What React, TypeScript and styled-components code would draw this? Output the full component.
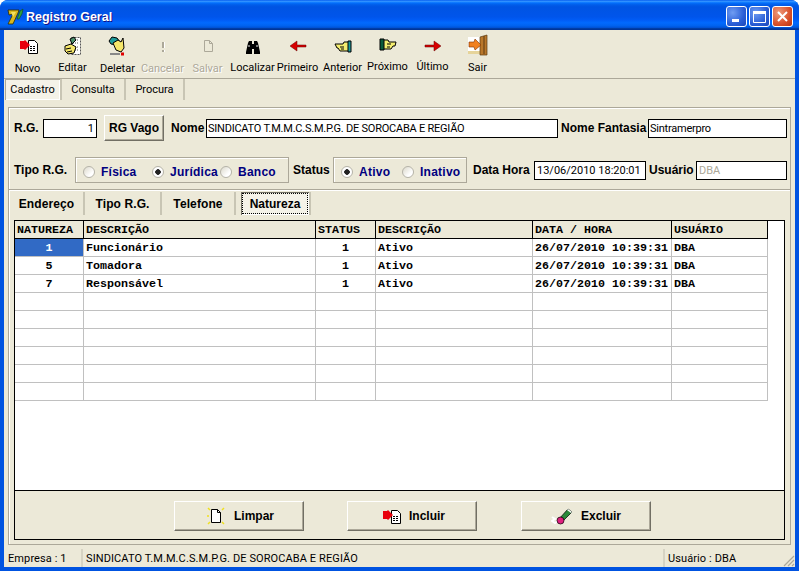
import React from 'react';
import styled, { createGlobalStyle } from 'styled-components';

const GlobalStyle = createGlobalStyle`
  html, body { margin: 0; padding: 0; background: #fff; }
  * { box-sizing: border-box; }
`;

const Window = styled.div`
  width: 799px;
  height: 571px;
  display: flex;
  flex-direction: column;
  border-radius: 8px 8px 0 0;
  overflow: hidden;
  background: #0053e1;
  font-family: "Liberation Sans", Arial, sans-serif;
  font-size: 12px;
  color: #000;
`;

const TitleBar = styled.div`
  height: 30px;
  flex: none;
  display: flex;
  align-items: center;
  padding: 3px 6px 0 6px;
  background: linear-gradient(180deg, #0058ee 0%, #3593ff 4%, #288eff 6%, #127dff 8%, #036ffc 10%, #0262ee 14%, #0057e5 20%, #0054e3 24%, #0055eb 56%, #005bf5 66%, #026afe 76%, #0062ef 86%, #0052d6 92%, #0040ab 94%, #003092 100%);
`;

const TitleText = styled.span`
  margin-left: 1px;
  flex: 1;
  color: #fff;
  font-size: 12.5px;
  font-weight: 700;
  text-shadow: 1px 1px 0 #0f1089;
`;

const CaptionButton = styled.div<{ $close?: boolean }>`
  width: 21px;
  height: 21px;
  margin-left: 2px;
  border: 1px solid #fff;
  border-radius: 3px;
  display: flex;
  align-items: center;
  justify-content: center;
  background: ${p => p.$close
    ? 'radial-gradient(circle at 30% 30%, #ee9b7d, #d9512b 60%, #b8330f)'
    : 'radial-gradient(circle at 30% 30%, #6f9cf2, #2a5ed6 60%, #1c46b8)'};
`;

const Body = styled.div`
  flex: 1;
  display: flex;
  flex-direction: column;
  margin: 0 4px 4px;
  background: #ece9d8;
  min-height: 0;
`;

const Toolbar = styled.div`
  height: 49px;
  flex: none;
  display: flex;
  padding-left: 1px;
  border-bottom: 1px solid #aca899;
  font-family: Roboto, "Liberation Sans", sans-serif;
  font-size: 11px;
`;

const ToolButton = styled.div`
  width: 45px;
  display: flex;
  flex-direction: column;
  align-items: center;
  padding-top: 4px;
`;

const ToolLabel = styled.span<{ $dy: number; $disabled?: boolean }>`
  white-space: nowrap;
  line-height: 14px;
  margin-top: ${p => p.$dy}px;
  color: ${p => (p.$disabled ? '#aca899' : '#000')};
  text-shadow: ${p => (p.$disabled ? '1px 1px 0 #fff' : 'none')};
`;

const TopTabs = styled.div`
  height: 21px;
  flex: none;
  display: flex;
  padding-left: 1px;
  font-family: Roboto, "Liberation Sans", sans-serif;
  font-size: 11px;
`;

const TopTab = styled.div<{ $w: number; $active?: boolean }>`
  width: ${p => p.$w}px;
  display: flex;
  align-items: center;
  justify-content: center;
  border-right: 2px solid #c8c5b4;
  background: ${p => (p.$active ? '#f4f2e8' : 'transparent')};
  box-shadow: ${p => (p.$active ? 'inset 1px 1px 0 #aca899, inset -1px -1px 0 #fff' : 'none')};
`;

const Content = styled.div`
  flex: 1;
  display: flex;
  flex-direction: column;
  padding: 7px 4px 4px;
  min-height: 0;
`;

const HeadPanel = styled.div`
  height: 82px;
  flex: none;
  padding: 7px 0 0 5px;
  border: 1px solid #aca899;
  border-bottom: 0;
  box-shadow: inset 1px 1px 0 #fff;
`;

const FormRow = styled.div<{ $top?: number }>`
  height: 26px;
  display: flex;
  align-items: center;
  margin-top: ${p => p.$top ?? 0}px;
`;

const FieldLabel = styled.span<{ $w: number; $ml?: number }>`
  width: ${p => p.$w}px;
  margin-left: ${p => p.$ml ?? 0}px;
  flex: none;
  font-weight: 700;
  white-space: nowrap;
`;

const TextBox = styled.div<{ $w: number; $right?: boolean; $muted?: boolean; $tight?: boolean }>`
  width: ${p => p.$w}px;
  height: 19px;
  flex: none;
  padding: 0 2px 0 ${p => (p.$tight ? 1 : 2)}px;
  border: 1px solid #000;
  background: #fff;
  font-family: Roboto, "Liberation Sans", sans-serif;
  font-size: 11px;
  line-height: 17px;
  letter-spacing: ${p => (p.$tight ? '-0.23px' : '0')};
  white-space: nowrap;
  text-align: ${p => (p.$right ? 'right' : 'left')};
  color: ${p => (p.$muted ? '#aca899' : '#000')};
`;

const RaisedButton = styled.div<{ $w: number; $h: number; $ml?: number }>`
  width: ${p => p.$w}px;
  height: ${p => p.$h}px;
  margin-left: ${p => p.$ml ?? 0}px;
  flex: none;
  display: flex;
  align-items: center;
  justify-content: center;
  font-weight: 700;
  background: #ece9d8;
  border: 1px solid;
  border-color: #fff #716f64 #716f64 #fff;
  box-shadow: inset -1px -1px 0 #aca899;
`;

const RadioBox = styled.div<{ $w: number }>`
  width: ${p => p.$w}px;
  height: 26px;
  flex: none;
  display: flex;
  align-items: center;
  padding-left: 7px;
  border: 1px solid #aca899;
  box-shadow: inset 1px 1px 0 #fff;
`;

const RadioOption = styled.div<{ $w: number }>`
  width: ${p => p.$w}px;
  display: flex;
  align-items: center;
  gap: 6px;
  padding-top: 3px;
  flex: none;
  color: #000080;
  font-weight: 700;
  letter-spacing: 0.25px;
`;

const RadioDot = styled.span<{ $on?: boolean }>`
  width: 12px;
  height: 12px;
  flex: none;
  border-radius: 50%;
  border: 1px solid #b5b3a8;
  background: ${p => (p.$on
    ? 'radial-gradient(circle, #222 0 2.5px, #fff 3px)'
    : 'linear-gradient(135deg, #dcd9cb, #fff 70%)')};
`;

const DetailPanel = styled.div`
  flex: 1;
  display: flex;
  flex-direction: column;
  border: 1px solid #aca899;
  box-shadow: inset 1px 1px 0 #fff;
  min-height: 0;
`;

const SubTabs = styled.div`
  height: 23px;
  margin-top: 2px;
  flex: none;
  display: flex;
  padding-left: 1px;
`;

const SubTab = styled.div<{ $w: number }>`
  width: ${p => p.$w}px;
  flex: none;
  display: flex;
  align-items: center;
  justify-content: center;
  font-weight: 700;
  letter-spacing: 0.1px;
  border-right: 2px solid #c8c5b4;
`;

const PressedTab = styled.div`
  width: 68px;
  margin-left: 5px;
  flex: none;
  padding: 1px;
  background: #f4f2e8;
  box-shadow: inset 1px 1px 0 #716f64, inset -1px -1px 0 #fff;
`;

const FocusLabel = styled.div`
  height: 100%;
  display: flex;
  align-items: center;
  justify-content: center;
  font-weight: 700;
  border: 1px dotted #000;
`;

const TabEnd = styled.div`
  width: 2px;
  background: #c8c5b4;
`;

const GridFrame = styled.div`
  flex: 1;
  margin: 5px 5px 4px 5px;
  display: flex;
  flex-direction: column;
  border: 1px solid #000;
  min-height: 0;
`;

const GridArea = styled.div`
  flex: 1;
  background: #fff;
  border-bottom: 1px solid #000;
`;

const DataTable = styled.table`
  width: 753px;
  table-layout: fixed;
  border-collapse: separate;
  border-spacing: 0;
  font-family: "Liberation Mono", "Courier New", monospace;
  font-size: 11.67px;
  font-weight: 700;
`;

const HeadCell = styled.th`
  height: 18px;
  padding: 0 2px;
  background: #ece9d8;
  border-right: 1px solid #000;
  border-bottom: 1px solid #000;
  text-align: left;
  font-weight: 700;
  white-space: nowrap;
`;

const Cell = styled.td<{ $center?: boolean; $selected?: boolean }>`
  height: 18px;
  padding: 2px 2px 0;
  line-height: 15px;
  border-right: 1px solid #c0c0c0;
  border-bottom: 1px solid #c0c0c0;
  white-space: nowrap;
  overflow: hidden;
  text-align: ${p => (p.$center ? 'center' : 'left')};
  background: ${p => (p.$selected ? '#316ac5' : '#fff')};
  color: ${p => (p.$selected ? '#fff' : '#000')};
`;

const GridFooter = styled.div`
  height: 48px;
  flex: none;
  display: flex;
  align-items: center;
  padding: 1px 0 0 159px;
`;

const ActionLabel = styled.span`
  margin-left: 6px;
`;

const StatusBar = styled.div`
  height: 18px;
  flex: none;
  display: flex;
  align-items: center;
  font-family: Roboto, "Liberation Sans", sans-serif;
  font-size: 11px;
  letter-spacing: 0.1px;
`;

const StatusCell = styled.div<{ $w?: number }>`
  width: ${p => (p.$w ? `${p.$w}px` : 'auto')};
  flex: ${p => (p.$w ? 'none' : 1)};
  height: 100%;
  padding: 3px 0 0 3px;
  border-left: 2px solid #d6d3c3;
  white-space: nowrap;
  &:first-child { border-left: 0; padding-left: 4px; }
`;

const Grip = styled.svg`
  flex: none;
  align-self: flex-end;
`;

const columns = [
  { title: 'NATUREZA', width: 69 },
  { title: 'DESCRIÇÃO', width: 232 },
  { title: 'STATUS', width: 60 },
  { title: 'DESCRIÇÃO', width: 157 },
  { title: 'DATA / HORA', width: 139 },
  { title: 'USUÁRIO', width: 96 },
];

const rows = [
  ['1', 'Funcionário', '1', 'Ativo', '26/07/2010 10:39:31', 'DBA'],
  ['5', 'Tomadora', '1', 'Ativo', '26/07/2010 10:39:31', 'DBA'],
  ['7', 'Responsável', '1', 'Ativo', '26/07/2010 10:39:31', 'DBA'],
  ['', '', '', '', '', ''],
  ['', '', '', '', '', ''],
  ['', '', '', '', '', ''],
  ['', '', '', '', '', ''],
  ['', '', '', '', '', ''],
  ['', '', '', '', '', ''],
];

const Icon = ({ size = 24, children }: { size?: number; children: React.ReactNode }) => (
  <svg width={size} height={size} viewBox={`0 0 ${size} ${size}`} style={{ flex: 'none' }}>
    {children}
  </svg>
);

const NovoIcon = () => (
  <Icon>
    <path d="M12.5 6.5h6l3 3v10h-9z" fill="#fff" stroke="#000" />
    <path d="M14 12.5h6M14 14.5h6M14 16.5h6" stroke="#000" strokeDasharray="2 1" />
    <path d="M4 7h4l1-1 5 5-5 5-1-1H4z" fill="#e8000c" />
  </Icon>
);

const EditarIcon = () => (
  <Icon>
    <path d="M10.5 3.5h9v17h-9z" fill="#fff" stroke="#555" strokeDasharray="2 1" />
    <path d="M12 6h6M12 9h6M14 13h4M14 16h4" stroke="#555" strokeDasharray="1 1" />
    <path d="M4 12l6-2 5 3-2 6-6 1-3-3z" fill="#f5e66a" stroke="#000" />
    <path d="M5 15l5-1M6 18l5-1" stroke="#000" />
    <path d="M9 5l4-2 2 3-4 4z" fill="#4d8f6b" stroke="#000" />
  </Icon>
);

const DeletarIcon = () => (
  <Icon>
    <path d="M3 7l3-4 5 1 3 4-4 3-5-1z" fill="#1c9c9c" stroke="#000" />
    <path d="M7 9l5-3 3 2 2-4 1 10-3 4-5-2z" fill="#f5e66a" stroke="#000" />
    <path d="M4 20h10" stroke="#888" strokeWidth="2" />
    <path d="M15 18.5h3v3h-3z" fill="#e00000" />
  </Icon>
);

const CancelarIcon = () => (
  <Icon>
    <path d="M11 8h2v6h-2zM11 16h2v2h-2z" fill="#aca899" />
    <path d="M13 8h1v6h-1zM13 16h1v2h-1z" fill="#fff" />
  </Icon>
);

const SalvarIcon = () => (
  <Icon>
    <path d="M8.5 6.5h5l3 3v8h-8z" fill="none" stroke="#aca899" />
    <path d="M13.5 6.5v3h3" fill="none" stroke="#aca899" />
  </Icon>
);

const BinocularsIcon = () => (
  <Icon>
    <path d="M5 18l2-9 1-2h3v3h2V7h3l1 2 2 9v2h-6v-5h-2v5H5z" fill="#000" />
    <path d="M7 11h2v2H7zM15 11h2v2h-2z" fill="#777" />
  </Icon>
);

const ArrowIcon = ({ flip }: { flip?: boolean }) => (
  <Icon>
    <path
      d={flip ? 'M4 11h9V7l7 5-7 5v-4H4z' : 'M20 11h-9V7l-7 5 7 5v-4h9z'}
      fill="#d80000"
      stroke="#600"
      strokeWidth="0.5"
    />
  </Icon>
);

const HandLeftIcon = () => (
  <Icon>
    <path d="M4 10h8l1-2h5v9h-9l-2-3H6z" fill="#f5ee70" stroke="#000" />
    <path d="M9 13h4M10 15h3" stroke="#000" />
    <path d="M17 7h3v11h-3z" fill="#1c9c9c" stroke="#000" />
  </Icon>
);

const HandRightIcon = () => (
  <Icon>
    <path d="M20 8h-7l-1-2H7v9h8l2-3h2z" fill="#f5ee70" stroke="#000" />
    <path d="M11 10h4M11 13h3" stroke="#000" />
    <path d="M4 5h4v11H4z" fill="#0a5a3c" stroke="#000" />
  </Icon>
);

const SairIcon = () => (
  <Icon size={24}>
    <path d="M2 3h14v16H2z" fill="#fff" />
    <path d="M2 17h14v3H2z" fill="#e6d49a" />
    <path d="M14 3l7-2v20h-7z" fill="#b9772a" stroke="#5c3a10" strokeWidth="0.7" />
    <path d="M18 2v18" stroke="#5c3a10" />
    <path d="M3 8h5l1-3 6 6-6 5-1-3H3z" fill="#f08020" stroke="#803000" strokeWidth="0.6" />
  </Icon>
);

const LogoIcon = () => (
  <svg width="19" height="19" viewBox="0 0 19 19" style={{ flex: 'none' }}>
    <path d="M2 3h11l-1 3-5 11H2l5-10-4 1z" fill="#d8b820" stroke="#2e2a00" strokeWidth="0.8" />
    <path d="M5 5h5l-3 5z" fill="#f2e060" />
    <path d="M11 12l3-8 3-2-1 5-3 5z" fill="#2f9f3f" stroke="#0a4a1a" strokeWidth="0.6" />
  </svg>
);

const LimparIcon = () => (
  <Icon>
    <path d="M7.5 5.5h6l3 3v10h-9z" fill="#fff" stroke="#000" />
    <path d="M13.5 5.5v3h3" fill="none" stroke="#000" />
    <path d="M4 4l2 2M20 4l-2 2M4 20l2-2M20 20l-2-2M3 12h2" stroke="#f0e020" strokeWidth="1.5" />
  </Icon>
);

const ExcluirIcon = () => (
  <Icon>
    <path d="M1 13l3 2-3 2 3 2 3-2" fill="none" stroke="#fff" strokeWidth="2" />
    <path d="M8 15l9-10 4 3-10 10z" fill="#2a8a3a" stroke="#000" strokeWidth="0.7" />
    <path d="M16 6l1-1 4 3-1 1z" fill="#fff" />
    <circle cx="9.5" cy="16.5" r="3.5" fill="#e0207f" stroke="#000" strokeWidth="0.7" />
  </Icon>
);

const tools: { label: string; icon: React.ReactNode; dy: number; disabled?: boolean }[] = [
  { label: 'Novo', icon: <NovoIcon />, dy: 4 },
  { label: 'Editar', icon: <EditarIcon />, dy: 3 },
  { label: 'Deletar', icon: <DeletarIcon />, dy: 4 },
  { label: 'Cancelar', icon: <CancelarIcon />, dy: 4, disabled: true },
  { label: 'Salvar', icon: <SalvarIcon />, dy: 4, disabled: true },
  { label: 'Localizar', icon: <BinocularsIcon />, dy: 3 },
  { label: 'Primeiro', icon: <ArrowIcon />, dy: 3 },
  { label: 'Anterior', icon: <HandLeftIcon />, dy: 3 },
  { label: 'Próximo', icon: <HandRightIcon />, dy: 2 },
  { label: 'Último', icon: <ArrowIcon flip />, dy: 2 },
  { label: 'Sair', icon: <SairIcon />, dy: 3 },
];

export default function App() {
  return (
    <Window>
      <GlobalStyle />
      <TitleBar>
        <LogoIcon />
        <TitleText>Registro Geral</TitleText>
        <CaptionButton>
          <svg width="13" height="13" viewBox="0 0 13 13">
            <path d="M2 9h7v3H2z" fill="#fff" />
          </svg>
        </CaptionButton>
        <CaptionButton>
          <svg width="15" height="15" viewBox="0 0 15 15">
            <path d="M1.5 3.5h12v10h-12z" fill="none" stroke="#fff" />
            <path d="M1 2h13v3H1z" fill="#fff" />
          </svg>
        </CaptionButton>
        <CaptionButton $close>
          <svg width="13" height="13" viewBox="0 0 13 13">
            <path d="M2 2l9 9M11 2l-9 9" stroke="#fff" strokeWidth="2" />
          </svg>
        </CaptionButton>
      </TitleBar>
      <Body>
        <Toolbar>
          {tools.map(tool => (
            <ToolButton key={tool.label}>
              {tool.icon}
              <ToolLabel $dy={tool.dy} $disabled={tool.disabled}>{tool.label}</ToolLabel>
            </ToolButton>
          ))}
        </Toolbar>
        <TopTabs>
          <TopTab $w={57} $active>Cadastro</TopTab>
          <TopTab $w={64}>Consulta</TopTab>
          <TopTab $w={59}>Procura</TopTab>
        </TopTabs>
        <Content>
          <HeadPanel>
            <FormRow>
              <FieldLabel $w={29}>R.G.</FieldLabel>
              <TextBox $w={54} $right>1</TextBox>
              <RaisedButton $w={60} $h={26} $ml={7}>RG Vago</RaisedButton>
              <FieldLabel $w={35} $ml={7}>Nome</FieldLabel>
              <TextBox $w={352} $tight>SINDICATO T.M.M.C.S.M.P.G. DE SOROCABA E REGIÃO</TextBox>
              <FieldLabel $w={87} $ml={3}>Nome Fantasia</FieldLabel>
              <TextBox $w={139} $tight>Sintramerpro</TextBox>
            </FormRow>
            <FormRow $top={16}>
              <FieldLabel $w={61}>Tipo R.G.</FieldLabel>
              <RadioBox $w={214}>
                <RadioOption $w={69}><RadioDot />Física</RadioOption>
                <RadioOption $w={68}><RadioDot $on />Jurídica</RadioOption>
                <RadioOption $w={60}><RadioDot />Banco</RadioOption>
              </RadioBox>
              <FieldLabel $w={40} $ml={4}>Status</FieldLabel>
              <RadioBox $w={134}>
                <RadioOption $w={61}><RadioDot $on />Ativo</RadioOption>
                <RadioOption $w={60}><RadioDot />Inativo</RadioOption>
              </RadioBox>
              <FieldLabel $w={61} $ml={6}>Data Hora</FieldLabel>
              <TextBox $w={112}>13/06/2010 18:20:01</TextBox>
              <FieldLabel $w={47} $ml={3}>Usuário</FieldLabel>
              <TextBox $w={91} $muted>DBA</TextBox>
            </FormRow>
          </HeadPanel>
          <DetailPanel>
            <SubTabs>
              <SubTab $w={75}>Endereço</SubTab>
              <SubTab $w={77}>Tipo R.G.</SubTab>
              <SubTab $w={74}>Telefone</SubTab>
              <PressedTab>
                <FocusLabel>Natureza</FocusLabel>
              </PressedTab>
              <TabEnd />
            </SubTabs>
            <GridFrame>
              <GridArea>
                <DataTable>
                  <colgroup>
                    {columns.map((col, i) => <col key={i} width={col.width} />)}
                  </colgroup>
                  <thead>
                    <tr>
                      {columns.map((col, i) => <HeadCell key={i}>{col.title}</HeadCell>)}
                    </tr>
                  </thead>
                  <tbody>
                    {rows.map((row, r) => (
                      <tr key={r}>
                        {row.map((value, c) => (
                          <Cell key={c} $center={c === 0 || c === 2} $selected={r === 0 && c === 0}>
                            {value}
                          </Cell>
                        ))}
                      </tr>
                    ))}
                  </tbody>
                </DataTable>
              </GridArea>
              <GridFooter>
                <RaisedButton $w={130} $h={30}><LimparIcon /><ActionLabel>Limpar</ActionLabel></RaisedButton>
                <RaisedButton $w={130} $h={30} $ml={43}><NovoIcon /><ActionLabel>Incluir</ActionLabel></RaisedButton>
                <RaisedButton $w={130} $h={30} $ml={44}><ExcluirIcon /><ActionLabel>Excluir</ActionLabel></RaisedButton>
              </GridFooter>
            </GridFrame>
          </DetailPanel>
        </Content>
        <StatusBar>
          <StatusCell $w={77}>Empresa : 1</StatusCell>
          <StatusCell>SINDICATO T.M.M.C.S.M.P.G. DE SOROCABA E REGIÃO</StatusCell>
          <StatusCell $w={118}>Usuário : DBA</StatusCell>
          <Grip width="14" height="14" viewBox="0 0 14 14">
            <path d="M13 3L3 13M13 7l-6 6M13 11l-2 2" stroke="#aca899" strokeWidth="1.2" />
          </Grip>
        </StatusBar>
      </Body>
    </Window>
  );
}
